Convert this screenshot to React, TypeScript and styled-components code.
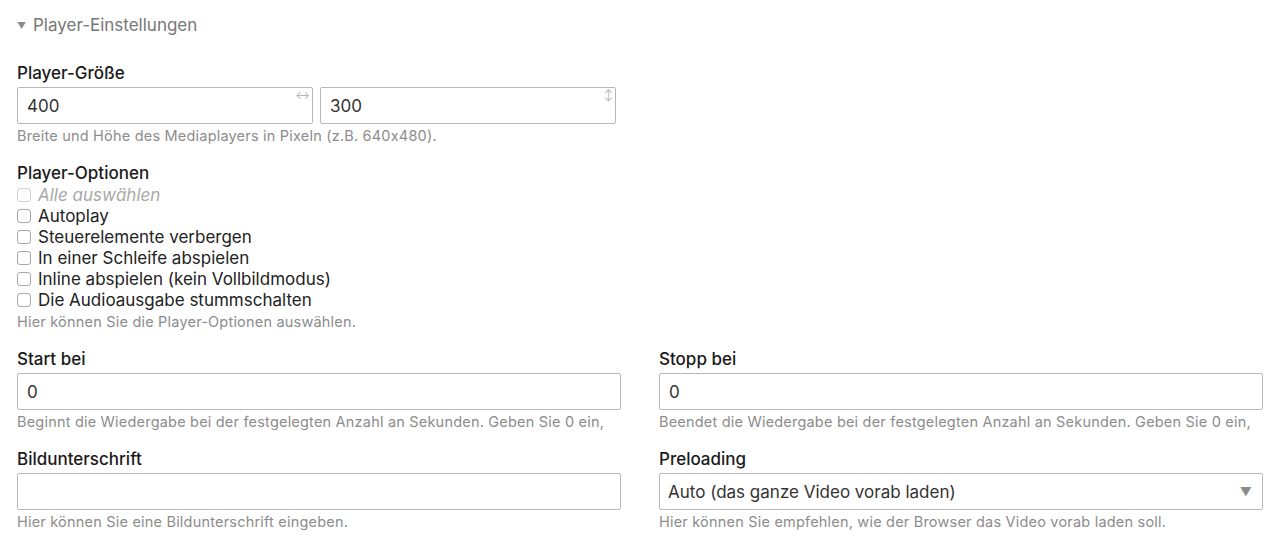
import styled, { createGlobalStyle } from 'styled-components';

const GlobalStyle = createGlobalStyle`
  html, body {
    margin: 0;
    background: #ffffff;
  }

  body {
    font-family: Inter, "Noto Sans", sans-serif;
    font-feature-settings: "calt" 0;
    color: #222222;
  }
`;

const options = [
  'Autoplay',
  'Steuerelemente verbergen',
  'In einer Schleife abspielen',
  'Inline abspielen (kein Vollbildmodus)',
  'Die Audioausgabe stummschalten',
];

const App = () => {
  return (
    <>
      <GlobalStyle />
      <Page>
        <Summary>
          <Caret>▼</Caret>
          Player-Einstellungen
        </Summary>

        <Field>
          <Label>Player-Größe</Label>
          <SizeRow>
            <SizeBox>
              <Input defaultValue="400" readOnly />
              <ResizeMark>↔</ResizeMark>
            </SizeBox>
            <SizeBox>
              <Input defaultValue="300" readOnly />
              <ResizeMark>↕</ResizeMark>
            </SizeBox>
          </SizeRow>
          <Help>Breite und Höhe des Mediaplayers in Pixeln (z.B. 640x480).</Help>
        </Field>

        <Field>
          <Label>Player-Optionen</Label>
          <CheckList>
            <CheckRow $muted>
              <Box $muted />
              Alle auswählen
            </CheckRow>
            {options.map((option) => (
              <CheckRow key={option}>
                <Box />
                {option}
              </CheckRow>
            ))}
          </CheckList>
          <Help>Hier können Sie die Player-Optionen auswählen.</Help>
        </Field>

        <Columns>
          <Field>
            <Label>Start bei</Label>
            <Input defaultValue="0" readOnly />
            <Help>Beginnt die Wiedergabe bei der festgelegten Anzahl an Sekunden. Geben Sie 0 ein,</Help>
          </Field>
          <Field>
            <Label>Stopp bei</Label>
            <Input defaultValue="0" readOnly />
            <Help>Beendet die Wiedergabe bei der festgelegten Anzahl an Sekunden. Geben Sie 0 ein,</Help>
          </Field>
          <Field>
            <Label>Bildunterschrift</Label>
            <Input defaultValue="" readOnly />
            <Help>Hier können Sie eine Bildunterschrift eingeben.</Help>
          </Field>
          <Field>
            <Label>Preloading</Label>
            <Select>
              <span>Auto (das ganze Video vorab laden)</span>
              <SelectArrow>▼</SelectArrow>
            </Select>
            <Help>Hier können Sie empfehlen, wie der Browser das Video vorab laden soll.</Help>
          </Field>
        </Columns>
      </Page>
    </>
  );
};

export default App;

const Page = styled.div`
  padding: 14px 17px 0 17px;
`;

const Summary = styled.div`
  display: flex;
  align-items: center;
  height: 22px;
  margin-bottom: 26px;

  font-size: 17px;
  color: #777777;
`;

const Caret = styled.span`
  width: 16px;
  font-size: 9px;
  color: #8a8a8a;
`;

const Field = styled.div`
  display: flex;
  flex-direction: column;
  margin-bottom: 16px;
`;

const Label = styled.div`
  height: 22px;
  line-height: 22px;
  margin-bottom: 3px;

  font-size: 17px;
  font-weight: 500;
  color: #1a1a1a;
`;

const SizeRow = styled.div`
  display: flex;
  gap: 7px;
`;

const SizeBox = styled.div`
  position: relative;
  width: 296px;
`;

const ResizeMark = styled.span`
  position: absolute;
  top: 1px;
  right: 3px;

  font-size: 11px;
  color: #b5b5b5;
`;

const Input = styled.input`
  box-sizing: border-box;
  width: 100%;
  height: 37px;
  padding: 0 9px;

  border: 1px solid #b8b8b8;
  border-radius: 2px;
  background: #ffffff;

  font-family: Inter, "Noto Sans", sans-serif;
  font-size: 17px;
  color: #333333;
  outline: none;
`;

const Help = styled.div`
  height: 20px;
  line-height: 20px;
  margin-top: 2px;

  font-size: 14.5px;
  letter-spacing: 0.2px;
  color: #8c8c8c;
`;

const CheckList = styled.div`
  display: flex;
  flex-direction: column;
  margin-top: -3px;
`;

const CheckRow = styled.label<{ $muted?: boolean }>`
  display: flex;
  align-items: center;
  gap: 7px;
  height: 21px;

  font-size: 17px;
  font-style: ${(p) => (p.$muted ? 'italic' : 'normal')};
  color: ${(p) => (p.$muted ? '#a8a8a8' : '#222222')};
`;

const Box = styled.span<{ $muted?: boolean }>`
  box-sizing: border-box;
  width: 14px;
  height: 14px;

  border: 1px solid ${(p) => (p.$muted ? '#d0d0d0' : '#a8a8a8')};
  border-radius: 3px;
  background: #ffffff;
`;

const Columns = styled.div`
  display: grid;
  grid-template-columns: 1fr 1fr;
  column-gap: 38px;
`;

const Select = styled.div`
  box-sizing: border-box;
  display: flex;
  align-items: center;
  justify-content: space-between;
  height: 37px;
  padding: 0 10px 0 8px;

  border: 1px solid #b8b8b8;
  border-radius: 2px;

  font-size: 17px;
  color: #333333;
`;

const SelectArrow = styled.span`
  font-size: 12px;
  color: #8a8a8a;
`;
